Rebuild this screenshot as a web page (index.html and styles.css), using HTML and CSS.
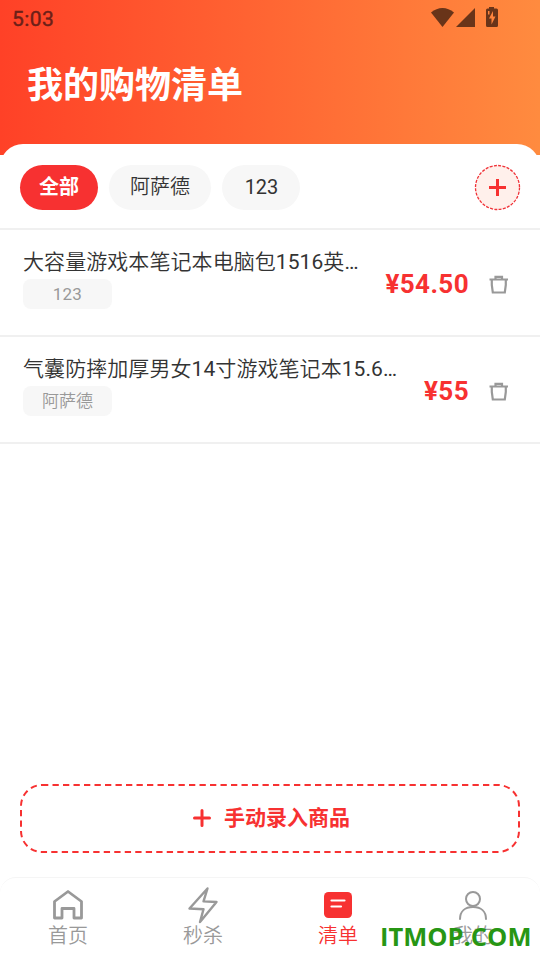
FILE: index.html
```html
<!DOCTYPE html>
<html lang="zh-CN">
<head>
<meta charset="utf-8">
<title>我的购物清单</title>
<link rel="stylesheet" href="styles.css">
</head>
<body>
<div class="app">
  <header class="header">
    <div class="status">
      <span class="time">5:03</span>
      <svg class="status-icons" width="68" height="20" viewBox="0 0 68 20">
        <path d="M0 4.600C7-1.500 16-1.500 23 4.600L11.500 19z"/>
        <path d="M25 19L44 0v19z"/>
        <path fill-rule="evenodd" d="M58-1h5v1.500h2.500q1.500 0 1.500 1.500V17.500q0 1.500-1.500 1.500h-9q-1.500 0-1.500-1.500V2q0-1.500 1.500-1.500h1.500zM57 3v3.500h1.500V3zM62 3l-4 7.500h2.500v6l4-8h-2.500z"/>
      </svg>
    </div>
    <h1 class="title">我的购物清单</h1>
  </header>
  <main class="sheet">
    <nav class="filters">
      <button class="chip active">全部</button>
      <button class="chip cjk">阿萨德</button>
      <button class="chip">123</button>
      <button class="add" aria-label="添加">
        <svg width="45" height="45" viewBox="0 0 45 45"><circle cx="22.500" cy="22.500" r="22" fill="#fff0eb" stroke="#f03238" stroke-width="1.300" stroke-dasharray="3 1.320"/><path d="M14 22.500h17M22.500 14v17" stroke="#f73131" stroke-width="3"/></svg>
      </button>
    </nav>
    <section class="item">
      <div class="info"><div class="name"><span class="cjk">大容量游戏本笔记本电脑包</span>1516<span class="cjk">英</span>…</div><span class="tag">123</span></div>
      <div class="price">¥54.50</div>
      <svg class="trash" width="20" height="20" viewBox="0 0 20 20"><path d="M.5 4.500H19M6.500 4V1.800h6.500V4M2.800 5v5l1 7.500h12l1-7.500V5"/></svg>
    </section>
    <section class="item">
      <div class="info"><div class="name"><span class="cjk">气囊防摔加厚男女</span>14<span class="cjk">寸游戏笔记本</span>15.6…</div><span class="tag cjk">阿萨德</span></div>
      <div class="price">¥55</div>
      <svg class="trash" width="20" height="20" viewBox="0 0 20 20"><path d="M.5 4.500H19M6.500 4V1.800h6.500V4M2.800 5v5l1 7.500h12l1-7.500V5"/></svg>
    </section>
  </main>
  <button class="manual">
    <svg class="outline" width="500" height="69" viewBox="0 0 500 69"><rect x="1" y="1" width="498" height="67" rx="21"/></svg>
    <svg class="plus" width="18" height="18" viewBox="0 0 18 18"><path d="M1.500 9h15M9 1.500v15" stroke="#f73131" stroke-width="3" stroke-linecap="round"/></svg>
    <span>手动录入商品</span>
  </button>
  <nav class="tabbar">
    <a class="tab">
      <svg width="36" height="36" viewBox="0 0 36 36"><path d="M4.500 13.500L18 3.500l13.500 10v16.500H24V20.500H12v9.500H4.500z"/></svg>
      <span class="cjk">首页</span>
    </a>
    <a class="tab">
      <svg class="bolt" width="36" height="36" viewBox="0 0 36 36"><path d="M22.500 0.500L4.500 20.500l14 .8-3.500 12.700L31.500 14l-13-.6z"/></svg>
      <span class="cjk">秒杀</span>
    </a>
    <a class="tab current">
      <svg width="36" height="36" viewBox="0 0 36 36"><rect x="4" y="4" width="28" height="26" rx="4.500" fill="#f73131" stroke="none"/><path d="M11.500 12.500h13M11.500 18.500h9.500" stroke="#fff" stroke-width="2.200"/></svg>
      <span class="cjk">清单</span>
    </a>
    <a class="tab">
      <svg width="36" height="36" viewBox="0 0 36 36"><g stroke-width="2"><circle cx="18" cy="11" r="7"/><path d="M5 31c0-7.500 5-12 13-12s13 4.500 13 12"/></g></svg>
      <span class="cjk">我的</span>
    </a>
  </nav>
  <div class="watermark">ITMOP.COM</div>
</div>
</body>
</html>
```
FILE: styles.css
```css
* { box-sizing: border-box; }
body {
  margin: 0;
  background: #fff;
  font-family: Roboto, "Noto Sans CJK SC", sans-serif;
  color: #333;
}
button { border: 0; padding: 0; font: inherit; color: inherit; background: none; }
svg { display: block; flex: none; overflow: visible; }
.app {
  position: relative;
  width: 540px;
  height: 960px;
  display: flex;
  flex-direction: column;
  overflow: hidden;
}
.header {
  height: 155px;
  flex: none;
  background: linear-gradient(90deg, #ff4127, #ff8b3f);
}
.status {
  height: 36px;
  padding: 0 42px 0 12px;
  display: flex;
  align-items: center;
  justify-content: space-between;
}
.time { font-size: 21px; letter-spacing: 0.4px; line-height: 36px; color: #6c2018; padding-top: 2px; -webkit-text-stroke: 0.4px #6c2018; }
.status-icons { fill: #693419; margin: -1px -1px 0 0; }
.title {
  margin: 20px 0 0 27px;
  font-family: "Noto Sans CJK SC", sans-serif;
  font-size: 36px;
  line-height: 52px;
  font-weight: 700;
  color: #fff;
}
.cjk { font-weight: 350; }
.sheet {
  flex: 1;
  margin-top: -11px;
  border-radius: 23px 23px 0 0;
  background: #fff;
}
.filters {
  height: 86px;
  padding: 21px 20px 0;
  display: flex;
  gap: 11px;
  border-bottom: 2px solid #f0f0f0;
}
.chip {
  height: 45px;
  padding: 0 21px;
  border-radius: 23px;
  background: #f7f7f7;
  font-size: 20px;
  line-height: 43px;
}
.chip:nth-child(3) { width: 78px; padding: 0 0 0 1px; }
.chip.active { width: 78px; padding: 0; background: #f73131; color: #fff; font-weight: 700; }
.add { width: 45px; height: 45px; margin-left: auto; }
.item {
  height: 107px;
  padding: 0 31px 0 23px;
  display: flex;
  align-items: center;
  border-bottom: 2px solid #f0f0f0;
}
.info { flex: 1; height: 75px; }
.name { font-size: 21px; line-height: 34px; height: 32px; white-space: nowrap; letter-spacing: 0.07px; }
.tag {
  display: block;
  width: 89px;
  height: 30px;
  margin-top: 2px;
  border-radius: 8px;
  background: #f7f7f7;
  color: #999;
  font-size: 17px;
  line-height: 30px;
  letter-spacing: 0.2px;
  text-align: center;
}
.tag.cjk { letter-spacing: 0; }
.price { padding-top: 3px; font-size: 26px; font-weight: 700; letter-spacing: 0.4px; line-height: 32px; color: #f73131; }
.trash { margin: 5px 0 0 20px; fill: none; stroke: #999; stroke-width: 2.200; }
.manual {
  position: relative;
  flex: none;
  width: 500px;
  height: 69px;
  margin: 0 20px 24px;
  display: flex;
  align-items: center;
  justify-content: center;
  gap: 13px;
  padding: 0 0 2px 3px;
  color: #f73131;
  font-family: "Noto Sans CJK SC", sans-serif;
  font-size: 21px;
  font-weight: 700;
}
.manual span { line-height: 30px; margin-top: -3px; }
.outline { position: absolute; inset: 0; fill: none; stroke: #f73131; stroke-width: 2; stroke-dasharray: 6.300 4.200; }
.tabbar {
  flex: none;
  height: 83px;
  display: flex;
  border-top: 1px solid #f5f5f5;
  border-radius: 16px 16px 0 0;
  background: #fff;
}
.tab {
  flex: 1;
  padding: 10px 0 0 1px;
  display: flex;
  flex-direction: column;
  align-items: center;
  color: #999;
  font-size: 20px;
  line-height: 24px;
}
.tab svg { margin-left: -1px; fill: none; stroke: #999; stroke-width: 2.800; stroke-linejoin: round; stroke-linecap: round; }
.tab svg.bolt { stroke-width: 2.400; }
.tab.current { color: #f73131; }
.watermark {
  position: absolute;
  left: 380px;
  bottom: 6px;
  font: 700 25.500px/36px "Open Sans", sans-serif;
  color: #279614;
  white-space: nowrap;
}
```
